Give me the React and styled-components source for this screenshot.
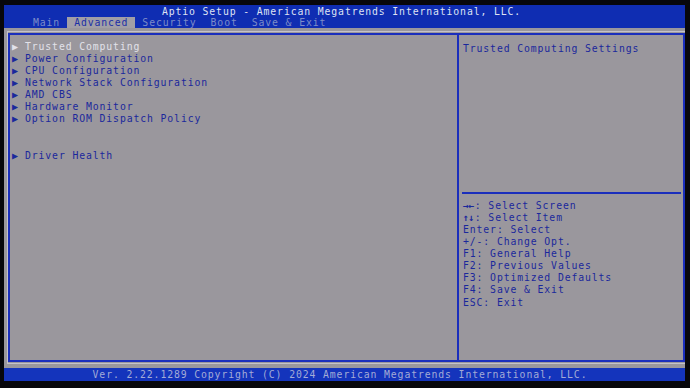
import React from 'react';
import styled, {createGlobalStyle} from 'styled-components';

const GlobalStyle = createGlobalStyle`
	html, body {
		margin: 0;
		padding: 0;
		background: #07070b;
	}
	body {
		font-family: "DejaVu Sans Mono", "Liberation Mono", monospace;
		font-size: 9.8px;
		letter-spacing: 0.88px;
	}
`;

const Screen = styled.div`
	width: 681px;
	height: 383px;
	margin: 5px 0 0 4px;
	display: flex;
	flex-direction: column;
	overflow: hidden;
`;

const Header = styled.header`
	height: 23px;
	background: #0f2db2;
	display: flex;
	flex-direction: column;
`;

const Title = styled.div`
	height: 11px;
	line-height: 11px;
	padding: 0.5px 6px 0 0;
	text-align: center;
	color: #dfe3f3;
	white-space: pre;
`;

const Tabs = styled.nav`
	display: flex;
	height: 11.5px;
	padding-left: 22px;
`;

const Tab = styled.span`
	height: 11.5px;
	line-height: 12px;
	padding: 0 7px;
	white-space: pre;
	color: ${p => (p.$active ? '#1b2fa6' : '#7d8cc8')};
	background: ${p => (p.$active ? '#a19fa6' : 'transparent')};
`;

const Body = styled.main`
	flex: 0 0 340px;
	background: #9a979d;
	padding: 3px 0 4px 3px;
	display: flex;
	box-sizing: border-box;
`;

const Frame = styled.div`
	flex: 1;
	border: 1px solid #c4c2ca;
	border-right: none;
	padding: 1px 0;
	display: flex;
`;

const Inner = styled.div`
	flex: 1;
	border: 2px solid #1a2ebc;
	display: flex;
`;

const LeftPane = styled.section`
	width: 446px;
	border-right: 2px solid #1a2ebc;
	padding: 5.5px 0 0 1px;
	box-sizing: content-box;
`;

const RightPane = styled.aside`
	flex: 1;
	display: flex;
	flex-direction: column;
`;

const HelpArea = styled.div`
	height: 149px;
	padding: 7.5px 0 0 1px;
	margin: 0 2px 0 3px;
	border-bottom: 2px solid #1a2ebc;
`;

const Line = styled.div`
	height: 12.15px;
	line-height: 12.15px;
	white-space: pre;
	color: ${p => (p.$selected ? '#e2e2ea' : '#1a289c')};
`;

const Item = styled(Line)`
	display: flex;
`;

const Arrow = styled.span`
	width: 14px;
	padding-left: 1px;
	box-sizing: border-box;
	font-size: 10px;
	letter-spacing: 0;
`;

const Keys = styled.div`
	padding: 6px 0 0 4px;
`;

const KeyGlyph = styled.span`
	font-weight: bold;
	letter-spacing: -0.5px;
	padding-right: 1px;
`;

const Footer = styled.footer`
	height: 12px;
	line-height: 12px;
	padding: 1px 14px 0 0;
	margin-right: -5px;
	background: #1434bc;
	color: #a3abd6;
	text-align: center;
	white-space: pre;
`;

const menu = [
	{label: 'Trusted Computing', selected: true},
	{label: 'Power Configuration'},
	{label: 'CPU Configuration'},
	{label: 'Network Stack Configuration'},
	{label: 'AMD CBS'},
	{label: 'Hardware Monitor'},
	{label: 'Option ROM Dispatch Policy'},
	null,
	null,
	{label: 'Driver Health'}
];

const keys = [
	['→←', ': Select Screen'],
	['↑↓', ': Select Item'],
	['', 'Enter: Select'],
	['', '+/-: Change Opt.'],
	['', 'F1: General Help'],
	['', 'F2: Previous Values'],
	['', 'F3: Optimized Defaults'],
	['', 'F4: Save & Exit'],
	['', 'ESC: Exit']
];

const tabs = ['Main', 'Advanced', 'Security', 'Boot', 'Save & Exit'];

export default function App() {
	return (
		<>
			<GlobalStyle />
			<Screen>
				<Header>
					<Title>Aptio Setup - American Megatrends International, LLC.</Title>
					<Tabs>
						{tabs.map(t => (
							<Tab key={t} $active={t === 'Advanced'}>{t}</Tab>
						))}
					</Tabs>
				</Header>
				<Body>
					<Frame>
						<Inner>
							<LeftPane>
								{menu.map((m, i) =>
									m ? (
										<Item key={i} $selected={m.selected}>
											<Arrow>▶</Arrow>
											{m.label}
										</Item>
									) : (
										<Line key={i} />
									)
								)}
							</LeftPane>
							<RightPane>
								<HelpArea>
									<Line>Trusted Computing Settings</Line>
								</HelpArea>
								<Keys>
									{keys.map(([g, t], i) => (
										<Line key={i}>
											{g && <KeyGlyph>{g}</KeyGlyph>}
											{t}
										</Line>
									))}
								</Keys>
							</RightPane>
						</Inner>
					</Frame>
				</Body>
				<Footer>Ver. 2.22.1289 Copyright (C) 2024 American Megatrends International, LLC.</Footer>
			</Screen>
		</>
	);
}
